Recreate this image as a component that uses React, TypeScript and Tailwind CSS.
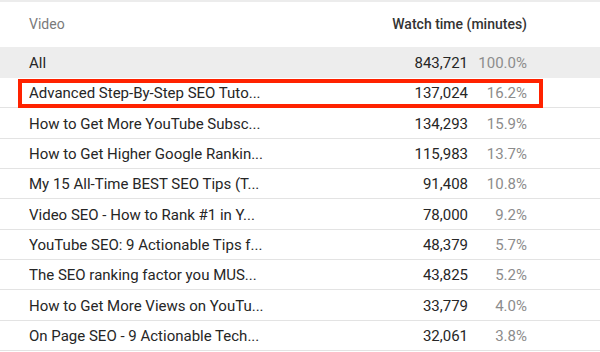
const rows = [
    { title: "Advanced Step-By-Step SEO Tuto...", minutes: "137,024", pct: "16.2%", marked: true },
    { title: "How to Get More YouTube Subsc...", minutes: "134,293", pct: "15.9%" },
    { title: "How to Get Higher Google Rankin...", minutes: "115,983", pct: "13.7%" },
    { title: "My 15 All-Time BEST SEO Tips (T...", minutes: "91,408", pct: "10.8%" },
    { title: "Video SEO - How to Rank #1 in Y...", minutes: "78,000", pct: "9.2%" },
    { title: "YouTube SEO: 9 Actionable Tips f...", minutes: "48,379", pct: "5.7%" },
    { title: "The SEO ranking factor you MUS...", minutes: "43,825", pct: "5.2%" },
    { title: "How to Get More Views on YouTu...", minutes: "33,779", pct: "4.0%" },
    { title: "On Page SEO - 9 Actionable Tech...", minutes: "32,061", pct: "3.8%" },
];

const App = () => {
    return (
        <div className="w-[600px] h-[352px] overflow-hidden bg-white font-['Roboto',sans-serif] text-[15px]">
            <div className="h-[2px] bg-[#ececec]" />
            <div className="flex items-center h-[45px] pl-[29px] pr-[73px] text-[14px]">
                <span className="flex-1 text-[#7a7a7a]">Video</span>
                <span className="font-medium text-[#333]">Watch time (minutes)</span>
            </div>
            <div className="flex items-center h-[31px] pt-[2px] pl-[29px] pr-[73px] bg-[#ededed] text-[#262626]">
                <span className="flex-1">All</span>
                <span className="text-right">843,721</span>
                <span className="w-[59px] text-right text-[#8c8c8c]">100.0%</span>
            </div>
            {rows.map((row) => (
                <div key={row.title} className="relative flex items-center h-[30.33px] pt-[2px] pl-[29px] pr-[73px] border-b border-[#e3e3e3] text-[#262626]">
                    {row.marked && (
                        <div className="absolute left-[18px] right-[57px] top-[1px] -bottom-[1px] border-[4px] border-[#ff2200]" />
                    )}
                    <span className="flex-1 truncate">{row.title}</span>
                    <span className="text-right">{row.minutes}</span>
                    <span className="w-[59px] text-right text-[#8c8c8c]">{row.pct}</span>
                </div>
            ))}
        </div>
    );
};

export default App;
